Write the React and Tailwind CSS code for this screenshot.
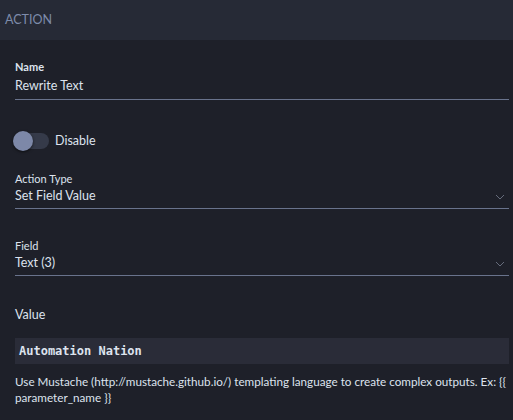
export default function App() {
  const font = { fontFamily: "Lato, 'Noto Sans', sans-serif" };
  return (
    <div className="w-[513px] h-[420px] bg-[#1e2029] text-[#dde3ee] overflow-hidden" style={font}>
      <div className="h-[40px] bg-[#262a36] flex items-center px-[5px] text-[12.5px] text-[#7e8cab]">ACTION</div>
      <div className="pl-[15px] pr-[4px]">
        <div className="pt-[20px]">
          <div className="text-[11px] font-bold leading-[13px] text-[#dde3ee]">Name</div>
          <div className="h-[27px] flex items-center text-[12.5px] border-b border-[#69738c]">Rewrite Text</div>
        </div>
        <div className="mt-[30px] flex items-center h-[22px] -ml-[2px]">
          <div className="relative w-[36px] h-[16px] rounded-full bg-[#353a49]">
            <div className="absolute -left-[0px] -top-[2px] w-[20px] h-[20px] rounded-full bg-[#7d88a8] shadow-[0_1px_3px_rgba(0,0,0,0.6)]"></div>
          </div>
          <span className="ml-[6px] text-[12.5px]">Disable</span>
        </div>
        <div className="mt-[20px]">
          <div className="text-[11px] leading-[13px]">Action Type</div>
          <div className="h-[24px] flex items-center justify-between text-[12.5px] border-b border-[#69738c]">
            <span>Set Field Value</span>
            <svg width="10" height="6" viewBox="0 0 10 6" className="mr-[4px]"><path d="M1 1l4 4 4-4" fill="none" stroke="#666c7c" strokeWidth="1" /></svg>
          </div>
        </div>
        <div className="mt-[30px]">
          <div className="text-[11px] leading-[13px]">Field</div>
          <div className="h-[24px] flex items-center justify-between text-[12.5px] border-b border-[#69738c]">
            <span>Text (3)</span>
            <svg width="10" height="6" viewBox="0 0 10 6" className="mr-[4px]"><path d="M1 1l4 4 4-4" fill="none" stroke="#666c7c" strokeWidth="1" /></svg>
          </div>
        </div>
        <div className="mt-[31px] text-[12.5px] leading-[16px]">Value</div>
        <div className="mt-[15px] h-[26px] bg-[#2a2c38] flex items-center px-[4px] text-[12px] font-bold" style={{ fontFamily: "'DejaVu Sans Mono', monospace" }}>Automation Nation</div>
        <div className="mt-[9px] text-[11.7px] leading-[16px] -mr-[4px]">Use Mustache (http://mustache.github.io/) templating language to create complex outputs. Ex: {"{{"} parameter_name {"}}"}</div>
      </div>
    </div>
  );
}
